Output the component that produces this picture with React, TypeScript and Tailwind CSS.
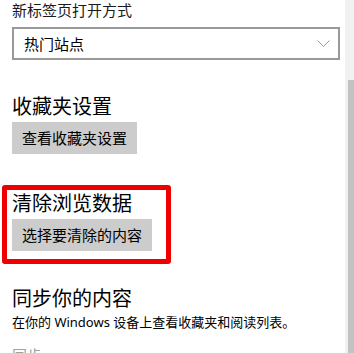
import React from 'react';

const font = "font-['Noto_Sans','Noto_Sans_CJK_SC',sans-serif]";

const Chevron = () => (
  <svg width="13" height="7" viewBox="0 0 13 7" fill="none" stroke="#9a9a9a" strokeWidth={1}>
    <path d="M0.5 0.5L6.5 6.5L12.5 0.5" />
  </svg>
);

const Section = ({ title, button }: { title: string; button: string }) => (
  <div>
    <div className="text-[20px] leading-[28px] text-black">{title}</div>
    <button className="mt-px h-[32px] bg-[#cccccc] px-[10px] text-[15px] leading-[32px] text-black">
      {button}
    </button>
  </div>
);

export default function App() {
  return (
    <div className={`${font} flex h-[353px] w-[354px] overflow-hidden bg-white`}>
      <div className="flex-1 pl-[12px] pr-[5px]">
        <div className="text-[15px] leading-[20px] text-[#1a1a1a]">新标签页打开方式</div>
        <div className="mt-[7px] flex h-[33px] items-center justify-between border-2 border-[#999999] pl-[10px] pr-[8px]">
          <span className="text-[15px] leading-[20px] text-black">热门站点</span>
          <Chevron />
        </div>

        <div className="mt-[33px]">
          <Section title="收藏夹设置" button="查看收藏夹设置" />
        </div>

        <div className="mt-[31px] -ml-[10px] w-fit rounded-[3px] border-[5px] border-[#ee0000] pb-[8px] pl-[5px] pr-[14px]">
          <Section title="清除浏览数据" button="选择要清除的内容" />
        </div>

        <div className="mt-[21px] text-[20px] leading-[28px] text-black">同步你的内容</div>
        <div className="text-[13px] leading-[18px] text-black">在你的 Windows 设备上查看收藏夹和阅读列表。</div>
        <div className="mt-[14px] text-[15px] leading-[20px] text-[#a0a0a0]">同步</div>
      </div>

      <div className="flex w-[9px] flex-col bg-[#f1f1f1] pl-[3px]">
        <div className="h-[80px]" />
        <div className="flex-1 bg-[#c2c2c2]" />
      </div>
    </div>
  );
}
